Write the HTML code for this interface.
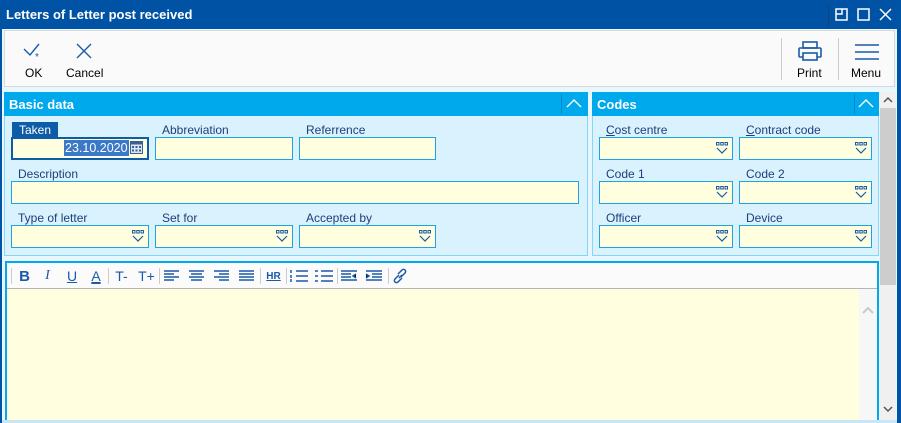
<!DOCTYPE html>
<html><head><style>
*{margin:0;padding:0;box-sizing:border-box}
body{width:901px;height:423px;overflow:hidden;background:#fff;font-family:"Liberation Sans",sans-serif;font-size:12px;position:relative}
.a{position:absolute}
.lbl{position:absolute;color:#1f3f7a;font-size:12px}
.inp{position:absolute;height:23px;background:#ffffe0;border:1px solid #1aa3e8}
.dd svg{position:absolute;right:4px;top:4px}
.hdr{position:absolute;background:#00a9ec;color:#fff;font-weight:bold;font-size:13px;padding:5px 0 0 5px}
</style></head><body>
<svg width="0" height="0" style="position:absolute"><defs><g id="ddi"><rect x="0.5" y="0.5" width="2.5" height="2.5" fill="none" stroke="#1a5aa8" stroke-width="1"/><rect x="4.75" y="0.5" width="2.5" height="2.5" fill="none" stroke="#1a5aa8" stroke-width="1"/><rect x="9" y="0.5" width="2.5" height="2.5" fill="none" stroke="#1a5aa8" stroke-width="1"/><path d="M1 6l5 5 5-5" fill="none" stroke="#1a5aa8" stroke-width="1.2"/></g></defs></svg>
<div class="a" style="left:0;top:0;width:901px;height:423px;background:#0054a6"></div>
<div class="a" style="left:0;top:0;width:897px;height:29px;background:#0053a4;color:#fff;font-weight:bold;font-size:13px;padding:7px 0 0 6px">Letters of Letter post received</div>
<div class="a" style="left:828px;top:4px;width:1px;height:22px;background:#1d3f6d"></div>
<svg class="a" style="left:833px;top:7px" width="62" height="16" viewBox="0 0 62 16" fill="none" stroke="#fff" stroke-width="1.5"><rect x="3" y="2" width="11" height="11"/><path d="M3 7h6V2"/><rect x="25" y="2" width="11" height="11"/><path d="M47 2l11 11M58 2L47 13"/></svg>
<div class="a" style="left:2px;top:29px;width:895px;height:392px;background:#e8f6fd"></div>
<div class="a" style="left:4px;top:30px;width:891px;height:57px;background:#fafafa;border:1px solid #d8d8d8"></div>
<svg class="a" style="left:22px;top:42px" width="22" height="20" fill="none" stroke="#1a5aa8" stroke-width="1.4"><path d="M2 7l6 6 9-11"/><text x="13" y="18" font-size="10" fill="#1a5aa8" stroke="none">*</text></svg>
<div class="a" style="left:25px;top:66px;font-size:12px">OK</div>
<svg class="a" style="left:76px;top:43px" width="16" height="16" fill="none" stroke="#1a5aa8" stroke-width="1.4"><path d="M1 1l14 14M15 1L1 15"/></svg>
<div class="a" style="left:66px;top:66px;font-size:12px">Cancel</div>
<div class="a" style="left:781px;top:38px;width:1px;height:42px;background:#ccc"></div>
<div class="a" style="left:838px;top:38px;width:1px;height:42px;background:#ccc"></div>
<svg class="a" style="left:797px;top:40px" width="26" height="22" fill="none" stroke="#1a5aa8" stroke-width="1.6"><rect x="6" y="2" width="14" height="6"/><rect x="2" y="8" width="22" height="9" rx="1"/><rect x="6" y="13" width="14" height="7" fill="#fafafa"/></svg>
<div class="a" style="left:797px;top:66px">Print</div>
<svg class="a" style="left:854px;top:43px" width="26" height="18" stroke="#1a5aa8" stroke-width="1.4"><path d="M1 2h24M1 9h24M1 16h24"/></svg>
<div class="a" style="left:851px;top:66px">Menu</div>

<div class="a" style="left:4px;top:92px;width:584px;height:164px;background:#d9f2fe;border:1px solid #86d6f6"></div>
<div class="hdr" style="left:4px;top:92px;width:584px;height:24px">Basic data</div>
<div class="a" style="left:561px;top:94px;width:1px;height:20px;background:#0088c8"></div>
<svg class="a" style="left:565px;top:97px" width="18" height="12" fill="none" stroke="#fff" stroke-width="1.4"><path d="M2 10l7-7 7 7"/></svg>
<div class="a" style="left:12px;top:122px;width:46px;height:15px;background:#0d5ca8;color:#fff;padding:1px 0 0 7px">Taken</div>
<div class="a" style="left:11px;top:137px;width:138px;height:23px;background:#ffffe0;border:2px solid #0d5ca8"></div>
<div class="a" style="left:64px;top:140px;height:16px;background:#3a78c8;color:#fff;font-size:12.5px;padding:1px 1px 0 1px">23.10.2020</div>
<svg class="a" style="left:130px;top:141px" width="13" height="13"><rect x="0.5" y="0.5" width="12" height="12" fill="#dde6f2" stroke="#3a5f92"/><rect x="0.5" y="0.5" width="12" height="3" fill="#3a5f92"/><g fill="#3a5f92"><rect x="2" y="5" width="2" height="2"/><rect x="5.5" y="5" width="2" height="2"/><rect x="9" y="5" width="2" height="2"/><rect x="2" y="8.5" width="2" height="2"/><rect x="5.5" y="8.5" width="2" height="2"/><rect x="9" y="8.5" width="2" height="2"/></g></svg>
<div class="lbl" style="left:162px;top:123px">Abbreviation</div>
<div class="inp" style="left:155px;top:137px;width:138px"></div>
<div class="lbl" style="left:306px;top:123px">Referrence</div>
<div class="inp" style="left:299px;top:137px;width:137px"></div>
<div class="lbl" style="left:18px;top:167px">Description</div>
<div class="inp" style="left:11px;top:181px;width:568px"></div>
<div class="lbl" style="left:18px;top:211px">Type of letter</div>
<div class="inp dd" style="left:11px;top:225px;width:138px"><svg width="12" height="12"><use href="#ddi"/></svg></div>
<div class="lbl" style="left:162px;top:211px">Set for</div>
<div class="inp dd" style="left:155px;top:225px;width:138px"><svg width="12" height="12"><use href="#ddi"/></svg></div>
<div class="lbl" style="left:306px;top:211px">Accepted by</div>
<div class="inp dd" style="left:299px;top:225px;width:137px"><svg width="12" height="12"><use href="#ddi"/></svg></div>

<div class="a" style="left:592px;top:92px;width:287px;height:164px;background:#d9f2fe;border:1px solid #86d6f6"></div>
<div class="hdr" style="left:592px;top:92px;width:287px;height:24px">Codes</div>
<div class="a" style="left:854px;top:94px;width:1px;height:20px;background:#0088c8"></div>
<svg class="a" style="left:857px;top:97px" width="18" height="12" fill="none" stroke="#fff" stroke-width="1.4"><path d="M2 10l7-7 7 7"/></svg>
<div class="lbl" style="left:606px;top:123px"><u>C</u>ost centre</div>
<div class="inp dd" style="left:599px;top:137px;width:134px"><svg width="12" height="12"><use href="#ddi"/></svg></div>
<div class="lbl" style="left:746px;top:123px"><u>C</u>ontract code</div>
<div class="inp dd" style="left:739px;top:137px;width:133px"><svg width="12" height="12"><use href="#ddi"/></svg></div>
<div class="lbl" style="left:606px;top:167px">Code 1</div>
<div class="inp dd" style="left:599px;top:181px;width:134px"><svg width="12" height="12"><use href="#ddi"/></svg></div>
<div class="lbl" style="left:746px;top:167px">Code 2</div>
<div class="inp dd" style="left:739px;top:181px;width:133px"><svg width="12" height="12"><use href="#ddi"/></svg></div>
<div class="lbl" style="left:606px;top:211px">Officer</div>
<div class="inp dd" style="left:599px;top:225px;width:134px"><svg width="12" height="12"><use href="#ddi"/></svg></div>
<div class="lbl" style="left:746px;top:211px">Device</div>
<div class="inp dd" style="left:739px;top:225px;width:133px"><svg width="12" height="12"><use href="#ddi"/></svg></div>

<div class="a" style="left:880px;top:92px;width:16px;height:329px;background:#f0f0f0"></div>
<div class="a" style="left:880px;top:108px;width:16px;height:177px;background:#cdcdcd"></div>
<svg class="a" style="left:883px;top:96px" width="10" height="8" fill="none" stroke="#555" stroke-width="1.5"><path d="M1 6l4-4 4 4"/></svg>
<svg class="a" style="left:883px;top:405px" width="10" height="8" fill="none" stroke="#555" stroke-width="1.5"><path d="M1 2l4 4 4-4"/></svg>

<div class="a" style="left:5px;top:261px;width:874px;height:162px;background:#fbfbfb;border:2px solid #00a8ec;border-bottom:none"></div>
<div class="a" style="left:7px;top:288px;width:870px;height:1px;background:#b5b5b5"></div>
<div class="a" style="left:7px;top:289px;width:852px;height:132px;background:#ffffe0"></div>
<div class="a" style="left:859px;top:289px;width:18px;height:132px;background:#f7f7f7"></div>
<svg class="a" style="left:861px;top:305px" width="14" height="10" fill="none" stroke="#c8c8c8" stroke-width="2"><path d="M2 8l5-5 5 5"/></svg>
<div class="a" style="left:2px;top:420px;width:895px;height:3px;background:#c9e6f6"></div>
<div class="a" style="left:11px;top:265px;height:22px;color:#1a5aa8;font-size:14px;display:flex;align-items:center">
<span style="width:1px;height:16px;background:#ccc;margin-right:2px"></span>
<b style="width:21px;font-size:15px;text-align:center">B</b>
<i style="width:25px;text-align:center;font-family:'Liberation Serif'">I</i>
<u style="width:24px;text-align:center">U</u>
<span style="width:24px;text-align:center;text-decoration:underline;text-decoration-thickness:2px">A</span>
<span style="width:1px;height:16px;background:#ccc"></span>
<span style="width:25px;text-align:center">T-</span>
<span style="width:25px;text-align:center">T+</span>
<span style="width:1px;height:16px;background:#ccc"></span>
<svg width="25" height="14" stroke="#1a5aa8" stroke-width="1.5"><path d="M4 2h15M4 5h10M4 8h15M4 11h10"/></svg>
<svg width="25" height="14" stroke="#1a5aa8" stroke-width="1.5"><path d="M4 2h15M6 5h11M4 8h15M6 11h11"/></svg>
<svg width="25" height="14" stroke="#1a5aa8" stroke-width="1.5"><path d="M4 2h15M9 5h10M4 8h15M9 11h10"/></svg>
<svg width="25" height="14" stroke="#1a5aa8" stroke-width="1.5"><path d="M4 2h15M4 5h15M4 8h15M4 11h15"/></svg>
<span style="width:1px;height:16px;background:#ccc"></span>
<b style="width:25px;font-size:10px;text-align:center;text-decoration:underline">HR</b>
<span style="width:1px;height:16px;background:#ccc"></span>
<svg width="25" height="14" stroke="#1a5aa8" stroke-width="1.5"><path d="M9 2h12M9 7h12M9 12h12M4 1v3M4 6v3M4 10v3"/></svg>
<svg width="25" height="14" stroke="#1a5aa8" stroke-width="1.5"><path d="M9 2h12M9 7h12M9 12h12M3 2h3M3 7h3M3 12h3"/></svg>
<span style="width:1px;height:16px;background:#ccc"></span>
<svg width="25" height="14" stroke="#1a5aa8" stroke-width="1.5"><path d="M3 2h16M3 5h10M3 8h10M3 11h16M18 5l-3 2 3 2"/></svg>
<svg width="25" height="14" stroke="#1a5aa8" stroke-width="1.5"><path d="M3 2h16M9 5h10M9 8h10M3 11h16M3 5l3 2-3 2"/></svg>
<span style="width:1px;height:16px;background:#ccc"></span>
<svg width="24" height="16" fill="none" stroke="#1a5aa8" stroke-width="1.5"><path d="M10 7l-4 4a2 2 0 0 0 3 3l4-4M12 9l4-4a2 2 0 0 0-3-3l-4 4M10 10l3-3"/></svg>
</div>
</body></html>
